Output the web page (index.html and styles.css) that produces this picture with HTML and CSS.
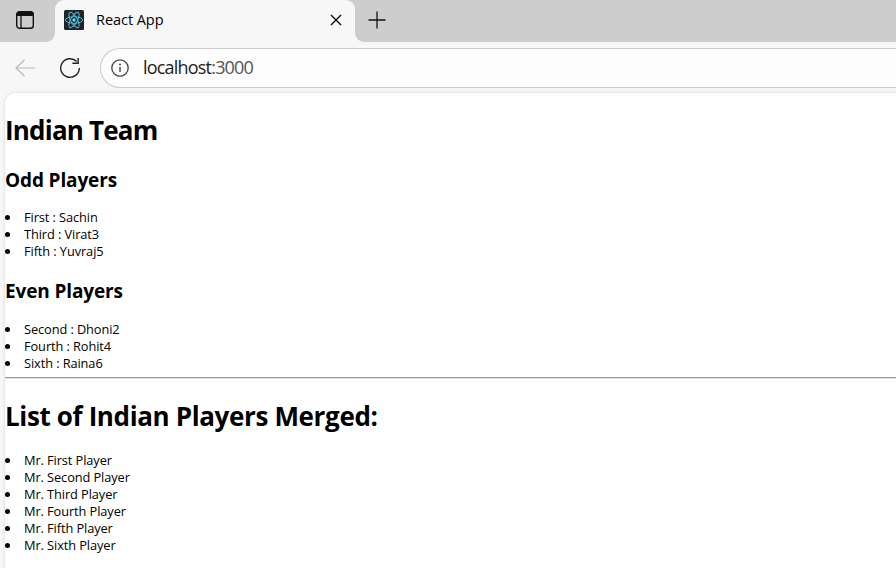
FILE: index.html
```html
<!DOCTYPE html>
<html lang="en">
<head>
<meta charset="utf-8">
<title>React App</title>
<link rel="stylesheet" href="styles.css">
</head>
<body>
<header class="tabs">
  <div class="workspace">
    <svg width="20" height="20" viewBox="0 0 20 20"><rect x="1.7" y="1.7" width="16.6" height="16.6" rx="2.8" fill="none" stroke="#111" stroke-width="1.4"/><path d="M1.5 6V4.3Q1.5 1.5 4.3 1.5H15.7Q18.5 1.5 18.5 4.3V6Z" fill="#111"/><path d="M6 6V18" stroke="#111" stroke-width="1.3"/></svg>
  </div>
  <div class="tab">
    <svg class="favicon" width="20" height="20" viewBox="0 0 20 20"><rect width="20" height="20" rx="1.5" fill="#20232a"/><g fill="none" stroke="#53b9d4" stroke-width="1"><ellipse cx="10" cy="10" rx="8.6" ry="3.3"/><ellipse cx="10" cy="10" rx="8.6" ry="3.3" transform="rotate(60 10 10)"/><ellipse cx="10" cy="10" rx="8.6" ry="3.3" transform="rotate(120 10 10)"/></g><circle cx="10" cy="10" r="1.7" fill="#61dafb"/></svg>
    <span class="tab-title">React App</span>
    <svg class="close" width="12" height="12" viewBox="0 0 12 12"><path d="M1 1L11 11M11 1L1 11" stroke="#111" stroke-width="1.4"/></svg>
  </div>
  <div class="new-tab">
    <svg width="18" height="18" viewBox="0 0 18 18"><path d="M9 .5V17.5M.5 9H17.5" stroke="#111" stroke-width="1.3"/></svg>
  </div>
</header>
<nav class="toolbar">
  <svg class="back" width="20" height="18" viewBox="0 0 20 18"><path d="M20 9H1M9.5 .7L1 9L9.5 17.3" fill="none" stroke="#b8b8b8" stroke-width="1.2"/></svg>
  <svg class="reload" width="22" height="22" viewBox="0 0 22 22"><path d="M17.7 4.6A9.3 9.3 0 1 0 20.3 11" fill="none" stroke="#222" stroke-width="1.4"/><path d="M19.2 1V6.2H13.4" fill="none" stroke="#222" stroke-width="1.4"/></svg>
  <div class="address">
    <svg width="18" height="18" viewBox="0 0 18 18"><circle cx="9" cy="9" r="8.2" fill="none" stroke="#444" stroke-width="1.3"/><path d="M9 8V13" stroke="#444" stroke-width="1.4"/><circle cx="9" cy="5.5" r=".95" fill="#444"/></svg>
    <span class="url">localhost<span class="port">:3000</span></span>
  </div>
</nav>
<main class="page">
  <h1 class="team">Indian Team</h1>
  <h3>Odd Players</h3>
  <ul>
    <li>First : Sachin</li>
    <li>Third : Virat3</li>
    <li>Fifth : Yuvraj5</li>
  </ul>
  <h3 class="even">Even Players</h3>
  <ul class="even-list">
    <li>Second : Dhoni2</li>
    <li>Fourth : Rohit4</li>
    <li>Sixth : Raina6</li>
  </ul>
  <hr>
  <h1 class="merged">List of Indian Players Merged:</h1>
  <ul>
    <li>Mr. First Player</li>
    <li>Mr. Second Player</li>
    <li>Mr. Third Player</li>
    <li>Mr. Fourth Player</li>
    <li>Mr. Fifth Player</li>
    <li>Mr. Sixth Player</li>
  </ul>
</main>
</body>
</html>
```
FILE: styles.css
```css
* { box-sizing: border-box; }
body {
  margin: 0;
  height: 568px;
  overflow: hidden;
  background: #f7f7f7;
  color: #000;
  font-family: "Segoe UI", "Open Sans", "Noto Sans", sans-serif;
}
svg { display: block; flex: none; }
.tabs {
  display: flex;
  height: 42px;
  background: linear-gradient(#cdcdcd 20px, #f7f7f7 20px);
}
.workspace {
  width: 55px;
  padding: 10px 0 0 15px;
  background: #cdcdcd;
  border-bottom-right-radius: 9px;
}
.tab {
  display: flex;
  align-items: center;
  width: 300px;
  height: 40px;
  padding: 0 13px 0 9px;
  background: #f7f7f7;
  border-radius: 9px 9px 0 0;
}
.tab-title {
  flex: 1;
  margin: -2px 0 0 12px;
  font-size: 14.5px;
  letter-spacing: -0.05px;
}
.new-tab {
  flex: 1;
  padding: 11px 0 0 13px;
  background: #cdcdcd;
  border-bottom-left-radius: 9px;
}
.toolbar {
  display: flex;
  align-items: center;
  height: 51px;
  padding-left: 15px;
}
.reload { margin-left: 24px; }
.address {
  display: flex;
  align-items: center;
  flex: 1;
  height: 40px;
  margin-left: 19px;
  padding-left: 10px;
  background: #fdfdfd;
  border: 1px solid #cbcbcb;
  border-right: 0;
  border-radius: 20px 0 0 20px;
}
.url {
  margin: -2px 0 0 14px;
  font-size: 18px;
  letter-spacing: -0.8px;
  color: #222;
}
.port { color: #555; }
.page {
  height: 475px;
  margin-left: 5px;
  background: #fff;
  border-top-left-radius: 10px;
  box-shadow: 0 0 3px #ccc;
  display: flow-root;
}
h1 {
  font-size: 26px;
  line-height: 36px;
}
.team {
  margin: 19px 0 0;
  letter-spacing: -0.8px;
}
h3 {
  margin: 19px 0 0;
  font-size: 19px;
  line-height: 26px;
  letter-spacing: -0.13px;
}
.even { margin-top: 18px; }
ul {
  margin: 16px 0 0;
  padding: 0;
  list-style: none;
  font-size: 12.8px;
  line-height: 17px;
  letter-spacing: -0.09px;
}
h3 + .even-list { margin-top: 17px; }
li { display: flex; align-items: center; }
li::before {
  content: "";
  width: 5px;
  height: 5px;
  margin-right: 14px;
  border-radius: 50%;
  background: #000;
}
hr {
  height: 2px;
  margin: 5px 0 0;
  border: 0;
  border-top: 1px solid #999;
  border-bottom: 1px solid #e4e4e4;
}
.merged {
  margin: 19px 0 0;
  letter-spacing: -0.36px;
}
.merged + ul { margin-top: 18px; }
```
